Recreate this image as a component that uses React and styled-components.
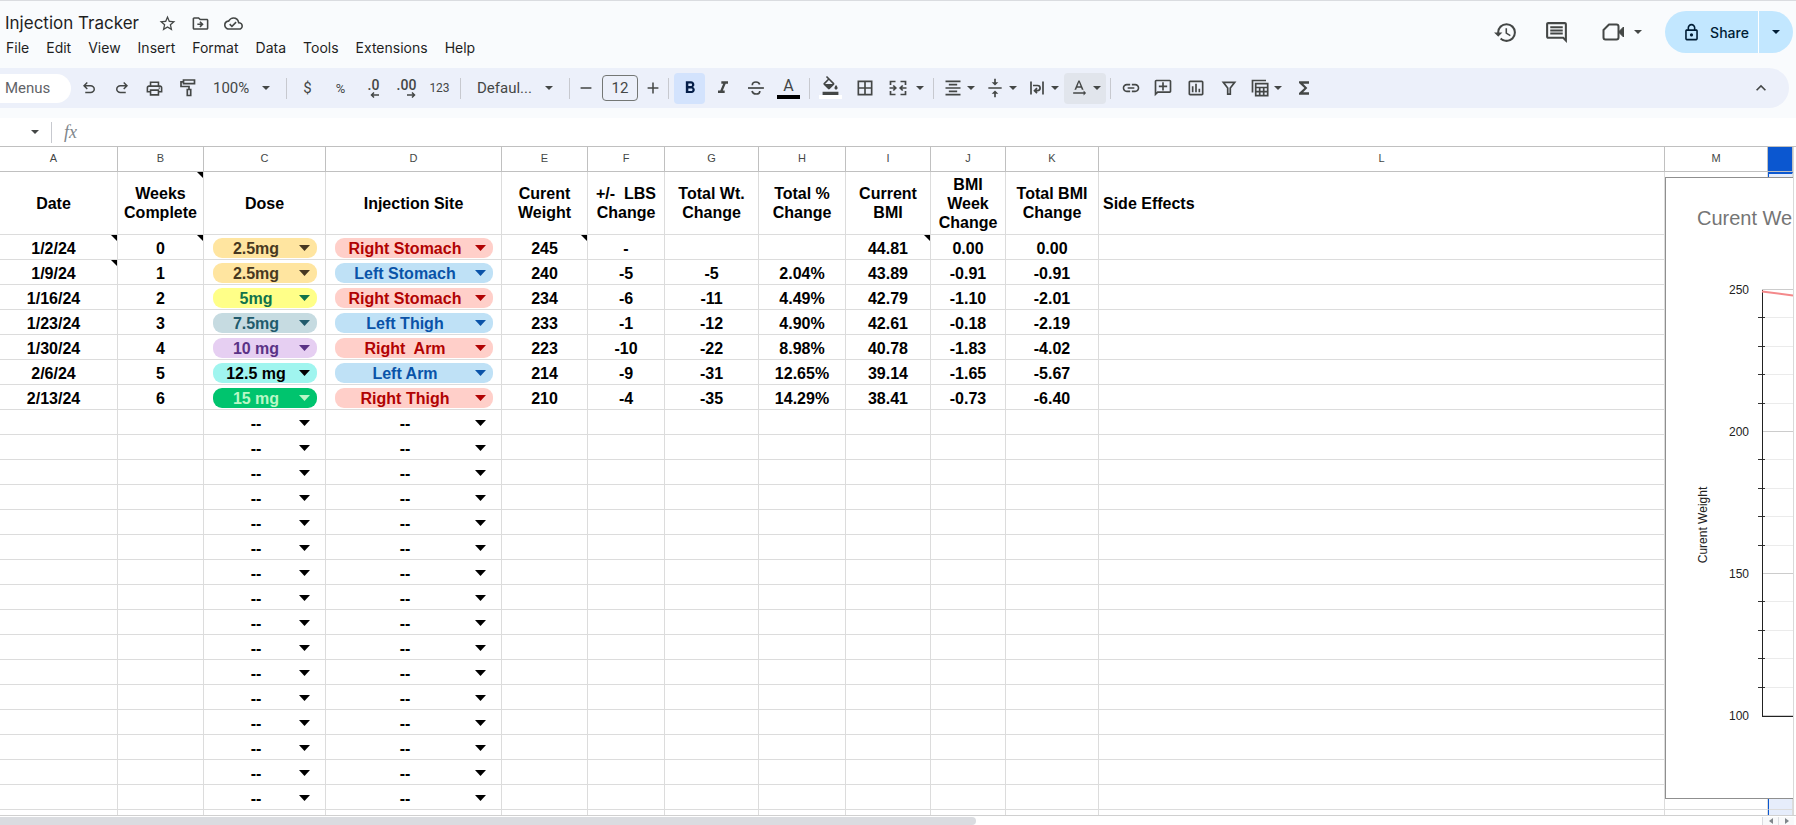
import React from 'react';
import styled, { createGlobalStyle } from 'styled-components';
import {
  MdBorderAll,
  MdExpandLess,
  MdFormatAlignCenter,
  MdFormatBold,
  MdFormatColorFill,
  MdFormatItalic,
  MdFunctions,
  MdHistory,
  MdLink,
  MdOutlineAddComment,
  MdOutlineCloudDone,
  MdOutlineComment,
  MdOutlineDriveFileMove,
  MdOutlineInsertChart,
  MdOutlineLock,
  MdOutlinePrint,
  MdStarBorder,
  MdTextRotationNone,
  MdVerticalAlignCenter
} from 'react-icons/md';

const GlobalStyle = createGlobalStyle`
  * {
    box-sizing: border-box;
  }

  body {
    margin: 0;
    background: #fff;
    color: #1f1f1f;
    font-family: Roboto, sans-serif;
  }

  button,
  input,
  select {
    margin: 0;
    padding: 0;
    border: 0;
    background: none;
    color: inherit;
    font: inherit;
  }

  svg {
    display: block;
    flex: none;
  }
`;

const Page = styled.div`
  display: flex;
  flex-direction: column;
  height: 100vh;
  overflow: hidden;
`;

const TopArea = styled.header`
  padding-bottom: 10px;
  border-top: 1px solid #dadce0;
  background: #f9fbfd;
`;

const TitleBar = styled.div`
  display: flex;
  justify-content: space-between;
  height: 67px;
  padding-right: 3px;
  font-family: Inter, Roboto, sans-serif;
`;

const TitleColumn = styled.div`
  display: flex;
  flex-direction: column;
  padding: 9px 0 0 5px;
`;

const TitleRow = styled.div`
  display: flex;
  align-items: center;
  gap: 14px;
  height: 26px;
  color: #444746;
`;

const DocTitle = styled.h1`
  margin: 0 5px 0 0;
  color: #1f1f1f;
  font-size: 17px;
  font-weight: 400;
  line-height: 24px;
`;

const PlainButton = styled.button`
  display: flex;
  align-items: center;
  justify-content: center;
`;

const MenuBar = styled.nav`
  display: flex;
  gap: 17px;
  padding-left: 1px;
  font-size: 14px;
  line-height: 24px;
`;

const Actions = styled.div`
  display: flex;
  align-items: center;
  gap: 26px;
  height: 62px;
  color: #444746;
`;

const MeetButton = styled(PlainButton)`
  gap: 9px;
  margin-left: 7px;
`;

const ShareGroup = styled.div`
  display: flex;
  height: 42px;
  margin-left: -3px;
  color: #001d35;
`;

const ShareButton = styled(PlainButton)`
  gap: 9px;
  width: 93px;
  padding-left: 8px;
  border-radius: 21px 0 0 21px;
  background: #c2e7ff;
  font-size: 14px;
  font-weight: 500;
`;

const ShareMenuButton = styled(PlainButton)`
  width: 35px;
  border-left: 1px solid #fff;
  border-radius: 0 21px 21px 0;
  background: #c2e7ff;
`;

const Toolbar = styled.div`
  display: flex;
  align-items: center;
  height: 40px;
  margin-right: 7px;
  border-radius: 0 20px 20px 0;
  background: #ecf0fa;
  color: #444746;
  font-size: 15px;
`;

const MenuSearch = styled.input`
  width: 71px;
  height: 29px;
  margin-right: 1px;
  padding-left: 5px;
  border-radius: 0 15px 15px 0;
  background: #fff;
  font-size: 15px;

  &::placeholder {
    color: #5f6368;
    opacity: 1;
  }
`;

const Tool = styled.button`
  display: flex;
  align-items: center;
  justify-content: center;
  width: ${({ $width }) => $width || 31}px;
  height: 31px;
  margin: 0 1px;
  border-radius: 4px;
  background: ${({ $active }) => ($active ? '#d3e3fd' : 'transparent')};
  color: ${({ $active }) => ($active ? '#041e49' : 'inherit')};
  font-size: ${({ $size }) => $size || 15}px;
`;

const MenuTool = styled.button`
  display: flex;
  align-items: center;
  justify-content: center;
  gap: ${({ $gap }) => $gap || 4}px;
  width: ${({ $width }) => $width || 42}px;
  height: 31px;
  border-radius: 4px;
  background: ${({ $hover }) => ($hover ? '#e1e5ec' : 'transparent')};
`;

const Mirrored = styled.span`
  transform: scaleX(-1);
`;

const Divider = styled.span`
  width: 1px;
  height: 21px;
  margin: 0 4px;
  background: #c7c9cf;
`;

const SelectWrap = styled.span`
  position: relative;
  display: flex;
  align-items: center;
  width: ${({ $width }) => $width}px;

  svg {
    position: absolute;
    right: 12px;
    pointer-events: none;
  }
`;

const ToolSelect = styled.select`
  width: 100%;
  height: 31px;
  padding-left: ${({ $indent }) => $indent}px;
  appearance: none;
`;

const SizeInput = styled.input`
  width: 36px;
  height: 26px;
  margin: 0 4px;
  border: 1px solid #747775;
  border-radius: 4px;
  text-align: center;
`;

const DecimalLabel = styled.span`
  display: flex;
  flex-direction: column;
  align-items: flex-end;
  font-size: 14px;
  font-weight: 500;
  line-height: 13px;
`;

const ColorTool = styled.span`
  display: flex;
  flex-direction: column;
  align-items: center;
  justify-content: flex-end;
  width: 23px;
  height: 22px;
  border-bottom: 4px solid ${({ $color }) => $color};
  font-size: 16px;
  line-height: 18px;
`;

const CollapseButton = styled(PlainButton)`
  width: 31px;
  height: 31px;
  margin: 0 13px 0 auto;
`;

const FormulaBar = styled.div`
  display: flex;
  align-items: center;
  height: 28px;
  color: #444746;
`;

const NameBoxButton = styled(PlainButton)`
  width: 47px;
  height: 24px;
  padding-left: 23px;
`;

const FxLabel = styled.label`
  margin: 0 8px;
  color: #80868b;
  font-family: 'Liberation Serif', serif;
  font-size: 18px;
  font-style: italic;
`;

const FormulaInput = styled.input`
  flex: 1;
  height: 24px;
`;

const SheetArea = styled.main`
  position: relative;
  display: flex;
  flex: 1;
  min-height: 0;
  overflow: hidden;
  border-top: 1px solid #c0c0c0;
  border-bottom: 1px solid #d0d0d0;
`;

const TableBox = styled.div`
  flex: 1;
  min-width: 0;
`;

const VerticalGutter = styled.div`
  width: 3px;
  border-left: 1px solid #d9d9d9;
`;

const SheetTable = styled.table`
  width: 100%;
  border-collapse: separate;
  border-spacing: 0;
  table-layout: fixed;
  color: #000;
  font-family: 'Liberation Sans', Arial, sans-serif;
`;

const ColumnHead = styled.th`
  height: 25px;
  padding: 0 ${({ $offset }) => $offset || 0}px 2px 0;
  border-right: 1px solid #c0c0c0;
  border-bottom: 1px solid #c0c0c0;
  background: ${({ $selected }) => ($selected ? '#0b57d0' : '#fff')};
  color: #444746;
  font-size: 11px;
  font-weight: 400;
`;

const Cell = styled.td`
  position: relative;
  height: ${({ $tall }) => ($tall ? 63 : 25)}px;
  padding: ${({ $text }) => ($text ? 2 : 0)}px ${({ $offset }) => $offset || 0}px 0 ${({ $left }) => ($left ? 4 : 0)}px;
  border-right: 1px solid #dcdcdc;
  border-bottom: 1px solid #dcdcdc;
  font-size: 16px;
  font-weight: 700;
  line-height: 19px;
  text-align: ${({ $left }) => ($left ? 'left' : 'center')};
  white-space: pre;
`;

const SelectedCell = styled(Cell)`
  border-top: ${({ $tall }) => ($tall ? '2px solid #0b57d0' : '0')};
  border-left: 1px solid #0b57d0;
  background: #e6edfb;
`;

/* comment marker in the top right corner of a cell */
const NoteMark = styled.span`
  position: absolute;
  top: 0;
  right: 0;
  border-top: 6px solid #000;
  border-left: 6px solid transparent;
`;

const Chip = styled.div`
  position: relative;
  display: flex;
  align-items: center;
  height: 20px;
  margin: 1px 8px 0 9px;
  border-radius: 9px;
  background: ${({ $bg }) => $bg};
  color: ${({ $color }) => $color};

  svg {
    position: absolute;
    right: 7px;
    pointer-events: none;
  }
`;

const ChipSelect = styled.select`
  width: 100%;
  height: 20px;
  padding: 1px 18px 0 0;
  appearance: none;
  line-height: 19px;
  text-align: center;
  text-align-last: center;
`;

/* the chart floats over the cells */
const ChartCard = styled.figure`
  position: absolute;
  top: 30px;
  right: 3px;
  width: 128px;
  height: 622px;
  margin: 0;
  border: 1px solid #8f8f8f;
  border-right: 0;
  background: #fff;
  font-family: 'Liberation Sans', Arial, sans-serif;
`;

const ScrollRow = styled.div`
  display: flex;
  align-items: stretch;
  height: 9px;
  padding: 1px 2px 0 0;
`;

const ScrollTrack = styled.div`
  flex: 1;
`;

const ScrollThumb = styled.div`
  width: 55.4%;
  height: 8px;
  border-radius: 0 4px 4px 0;
  background: #dadce0;
`;

const ScrollButton = styled(PlainButton)`
  width: 16px;
  border-left: 1px solid #dadce0;
  background: #f8f9fa;
  color: #80868b;
`;

const Caret = ({ width = 8, height = 4 }) => (
  <svg width={width} height={height} viewBox="0 0 10 5" preserveAspectRatio="none" aria-hidden="true">
    <path d="M0 0h10L5 5z" fill="currentColor" />
  </svg>
);

const Symbol = ({ path, size = 18 }) => (
  <svg width={size} height={size} viewBox="0 -960 960 960" fill="currentColor" aria-hidden="true">
    <path d={path} />
  </svg>
);

const StrokeIcon = ({ size = 20, children }) => (
  <svg
    width={size}
    height={size}
    viewBox="0 0 20 20"
    fill="none"
    stroke="currentColor"
    strokeWidth="1.7"
    aria-hidden="true"
  >
    {children}
  </svg>
);

const undoPath =
  'M280-200v-80h284q63 0 109.5-40T720-420q0-60-46.5-100T564-560H312l104 104-56 56-200-200 200-200 56 56-104 104h252q97 0 166.5 63T800-420q0 94-69.5 157T564-200H280Z';
const redoPath =
  'M396-200q-97 0-166.5-63T160-420q0-94 69.5-157T396-640h252L544-744l56-56 200 200-200 200-56-56 104-104H396q-63 0-109.5 40T240-420q0 60 46.5 100T396-280h284v80H396Z';

const PaintIcon = () => (
  <StrokeIcon>
    <path d="M5.5 2h11v3.600h-11zM5.500 3.800H3v4.700h8v3M9.300 11.500h3.400v6H9.300z" />
  </StrokeIcon>
);

const StrikeIcon = () => (
  <StrokeIcon>
    <path d="M2 10h16" />
    <path d="M6.300 7.200C6.300 5 8 4 10 4c1.900 0 3.200.9 3.700 2.500M6 13c.5 1.900 2 3 4.100 3 2.200 0 3.700-1.100 3.700-3.100" />
  </StrokeIcon>
);

const MergeIcon = () => (
  <StrokeIcon>
    <path d="M7.500 3.500H2.500v3.500M12.500 3.500h5v3.500M7.500 16.500H2.500V13M12.500 16.500h5V13" />
    <path d="M1.500 10h6M5.300 7.500 7.800 10l-2.500 2.500M18.500 10h-6M14.700 7.500 12.200 10l2.500 2.500" />
  </StrokeIcon>
);

const WrapIcon = () => (
  <StrokeIcon>
    <path d="M4 3.500v13M16 3.500v13M6 7.500h4.500a2.600 2.600 0 0 1 0 5.200H8M10 10.200l-2.500 2.500 2.500 2.500" />
  </StrokeIcon>
);

const FilterIcon = () => (
  <StrokeIcon>
    <path d="M4.300 4.300h11.400L11.300 10v6.200H8.700V10z" />
  </StrokeIcon>
);

const TableViewIcon = () => (
  <StrokeIcon>
    <path d="M2.500 14.500V2.500H16" />
    <path d="M5.700 5.700h12v12h-12zM5.700 9.500h12M5.700 13.600h12M9.700 9.500v8M13.700 9.500v8" />
  </StrokeIcon>
);

const MeetIcon = () => (
  <svg width="23" height="20" viewBox="0 0 23 20" aria-hidden="true">
    <path
      d="M7 2.500h7.500a2 2 0 0 1 2 2v11a2 2 0 0 1-2 2h-11a2 2 0 0 1-2-2V8z"
      fill="none"
      stroke="currentColor"
      strokeWidth="2"
      strokeLinejoin="round"
    />
    <path d="M16.500 10 21.500 5v10z" fill="currentColor" stroke="currentColor" />
  </svg>
);

const SmallArrow = ({ left }) => (
  <svg width="9" height="6" viewBox="0 0 9 6" fill="none" stroke="currentColor" strokeWidth="1.500" aria-hidden="true">
    <path d={left ? 'M9 3H1.500M4 .5 1.500 3 4 5.500' : 'M0 3h7.500M5 .5 7.500 3 5 5.500'} />
  </svg>
);

const menus = ['File', 'Edit', 'View', 'Insert', 'Format', 'Data', 'Tools', 'Extensions', 'Help'];

const columns = [
  { letter: 'A', width: 118, title: 'Date', offset: 10 },
  { letter: 'B', width: 86, title: 'Weeks\nComplete', note: true },
  { letter: 'C', width: 122, title: 'Dose' },
  { letter: 'D', width: 176, title: 'Injection Site' },
  { letter: 'E', width: 86, title: 'Curent\nWeight' },
  { letter: 'F', width: 77, title: '+/-  LBS\nChange' },
  { letter: 'G', width: 94, title: 'Total Wt.\nChange' },
  { letter: 'H', width: 87, title: 'Total %\nChange' },
  { letter: 'I', width: 85, title: 'Current\nBMI' },
  { letter: 'J', width: 75, title: 'BMI\nWeek\nChange' },
  { letter: 'K', width: 93, title: 'Total BMI\nChange' },
  { letter: 'L', title: 'Side Effects', left: true },
  { letter: 'M', width: 103, title: '' }
];

const doses = {
  '2.5mg': ['#ffe5a0', '#473821'],
  '5mg': ['#ffff88', '#11734b'],
  '7.5mg': ['#c6dbe1', '#215a6c'],
  '10 mg': ['#e6cff2', '#5a3286'],
  '12.5 mg': ['#a0f5ef', '#000000'],
  '15 mg': ['#00c46e', '#b9f8c6']
};

const red = ['#ffcfc9', '#b10202'];
const blue = ['#bfe1f6', '#0a53a8'];

const sites = {
  'Right Stomach': red,
  'Left Stomach': blue,
  'Left Thigh': blue,
  'Right\u00a0 Arm': red,
  'Left Arm': blue,
  'Right Thigh': red
};

const records = [
  ['1/2/24', '0', '2.5mg', 'Right Stomach', '245', '-', '', '', '44.81', '0.00', '0.00'],
  ['1/9/24', '1', '2.5mg', 'Left Stomach', '240', '-5', '-5', '2.04%', '43.89', '-0.91', '-0.91'],
  ['1/16/24', '2', '5mg', 'Right Stomach', '234', '-6', '-11', '4.49%', '42.79', '-1.10', '-2.01'],
  ['1/23/24', '3', '7.5mg', 'Left Thigh', '233', '-1', '-12', '4.90%', '42.61', '-0.18', '-2.19'],
  ['1/30/24', '4', '10 mg', 'Right\u00a0 Arm', '223', '-10', '-22', '8.98%', '40.78', '-1.83', '-4.02'],
  ['2/6/24', '5', '12.5 mg', 'Left Arm', '214', '-9', '-31', '12.65%', '39.14', '-1.65', '-5.67'],
  ['2/13/24', '6', '15 mg', 'Right Thigh', '210', '-4', '-35', '14.29%', '38.41', '-0.73', '-6.40']
];

const rows = records.concat(Array.from({ length: 17 }, () => []));

// row index + column letter of the cells that hold a comment
const notes = ['0A', '0B', '0E', '0I', '1A'];

const ChipCell = ({ value, colors, label }) => {
  const [bg, color] = colors[value] || ['transparent', '#000000'];
  return (
    <Chip $bg={bg} $color={color}>
      <ChipSelect aria-label={label} defaultValue={value || '--'}>
        <option>{value || '--'}</option>
      </ChipSelect>
      <Caret width={11} height={6} />
    </Chip>
  );
};

const Header = () => (
  <TitleBar>
    <TitleColumn>
      <TitleRow>
        <DocTitle>Injection Tracker</DocTitle>
        <PlainButton aria-label="Star"><MdStarBorder size={19} /></PlainButton>
        <PlainButton aria-label="Move"><MdOutlineDriveFileMove size={19} /></PlainButton>
        <PlainButton aria-label="Document status"><MdOutlineCloudDone size={19} /></PlainButton>
      </TitleRow>
      <MenuBar>
        {menus.map(name => <PlainButton key={name}>{name}</PlainButton>)}
      </MenuBar>
    </TitleColumn>
    <Actions>
      <PlainButton aria-label="Version history"><MdHistory size={25} /></PlainButton>
      <PlainButton aria-label="Comments"><MdOutlineComment size={25} /></PlainButton>
      <MeetButton aria-label="Join a call">
        <MeetIcon />
        <Caret />
      </MeetButton>
      <ShareGroup>
        <ShareButton><MdOutlineLock size={19} />Share</ShareButton>
        <ShareMenuButton aria-label="Share options"><Caret /></ShareMenuButton>
      </ShareGroup>
    </Actions>
  </TitleBar>
);

const Tools = () => (
  <Toolbar role="toolbar">
    <MenuSearch aria-label="Search menus" placeholder="Menus" />
    <Tool aria-label="Undo"><Symbol path={undoPath} /></Tool>
    <Tool aria-label="Redo"><Symbol path={redoPath} /></Tool>
    <Tool aria-label="Print"><MdOutlinePrint size={19} /></Tool>
    <Tool aria-label="Paint format"><PaintIcon /></Tool>
    <SelectWrap $width={78}>
      <ToolSelect aria-label="Zoom" $indent={9}><option>100%</option></ToolSelect>
      <Caret />
    </SelectWrap>
    <Divider />
    <Tool aria-label="Currency">$</Tool>
    <Tool aria-label="Percent" $size={13}>%</Tool>
    <Tool aria-label="Decrease decimal places">
      <DecimalLabel>.0<SmallArrow left /></DecimalLabel>
    </Tool>
    <Tool aria-label="Increase decimal places">
      <DecimalLabel>.00<SmallArrow /></DecimalLabel>
    </Tool>
    <Tool aria-label="More formats" $size={12}>123</Tool>
    <Divider />
    <SelectWrap $width={100}>
      <ToolSelect aria-label="Font" $indent={12}><option>Defaul...</option></ToolSelect>
      <Caret />
    </SelectWrap>
    <Divider />
    <Tool $width={22} aria-label="Decrease font size"><StrokeIcon size={18}><path d="M4 10h12" /></StrokeIcon></Tool>
    <SizeInput aria-label="Font size" defaultValue="12" />
    <Tool $width={20} aria-label="Increase font size"><StrokeIcon size={18}><path d="M4 10h12M10 4v12" /></StrokeIcon></Tool>
    <Divider />
    <Tool $active aria-label="Bold"><MdFormatBold size={20} /></Tool>
    <Tool aria-label="Italic"><MdFormatItalic size={20} /></Tool>
    <Tool aria-label="Strikethrough"><StrikeIcon /></Tool>
    <Tool aria-label="Text color"><ColorTool $color="#000">A</ColorTool></Tool>
    <Divider />
    <Tool aria-label="Fill color"><ColorTool $color="#fff"><MdFormatColorFill size={19} /></ColorTool></Tool>
    <Tool $width={33} aria-label="Borders"><MdBorderAll size={20} /></Tool>
    <MenuTool $width={47} $gap={8} aria-label="Merge cells"><MergeIcon /><Caret /></MenuTool>
    <Divider />
    <MenuTool aria-label="Horizontal align"><MdFormatAlignCenter size={20} /><Caret /></MenuTool>
    <MenuTool aria-label="Vertical align"><MdVerticalAlignCenter size={20} /><Caret /></MenuTool>
    <MenuTool aria-label="Text wrapping"><WrapIcon /><Caret /></MenuTool>
    <MenuTool $hover aria-label="Text rotation"><MdTextRotationNone size={20} /><Caret /></MenuTool>
    <Divider />
    <Tool $width={29} aria-label="Insert link"><MdLink size={20} /></Tool>
    <Tool aria-label="Insert comment"><Mirrored><MdOutlineAddComment size={20} /></Mirrored></Tool>
    <Tool aria-label="Insert chart"><MdOutlineInsertChart size={20} /></Tool>
    <Tool aria-label="Create a filter"><FilterIcon /></Tool>
    <MenuTool aria-label="Table views"><TableViewIcon /><Caret /></MenuTool>
    <Tool aria-label="Functions"><MdFunctions size={20} /></Tool>
    <CollapseButton aria-label="Hide the menus"><MdExpandLess size={20} /></CollapseButton>
  </Toolbar>
);

const Chart = () => {
  const ticks = Array.from({ length: 16 }, (_, i) => ({
    major: i % 5 === 0,
    value: 250 - i * 10,
    y: Math.round(112 + i * 28.4) - 0.5
  }));

  return (
    <ChartCard>
      <svg width="127" height="620" role="img" aria-label="Curent Weight chart">
        <text x="31" y="47" fontSize="20" fill="#757575">Curent We</text>
        {ticks.map(({ major, value, y }) => (
          <g key={value}>
            <path d={`M96 ${y}h31`} stroke={major ? '#cccccc' : '#ebebeb'} />
            {major && <text x="83" y={y + 4} fontSize="12" fill="#222" textAnchor="end">{value}</text>}
            {!major && <path d={`M92 ${y}h7`} stroke="#333" />}
          </g>
        ))}
        <path d="M96.500 112v427M96 538.500h31" stroke="#222" />
        <path d="M96 113.500 127 117.500" stroke="#f4898b" strokeWidth="2" />
        <text fontSize="12" fill="#222" textAnchor="middle" transform="translate(41 347) rotate(-90)">
          Curent Weight
        </text>
      </svg>
    </ChartCard>
  );
};

const Sheet = () => (
  <SheetArea>
    <TableBox>
      <SheetTable>
        <colgroup>
          {columns.map(({ letter, width }) => <col key={letter} width={width} />)}
          <col width="25" />
        </colgroup>
        <thead>
          <tr>
            {columns.map(({ letter, offset }) => (
              <ColumnHead key={letter} $offset={offset}>{letter}</ColumnHead>
            ))}
            <ColumnHead $selected aria-label="N" />
          </tr>
        </thead>
        <tbody>
          <tr>
            {columns.map(({ letter, title, offset, left, note }) => (
              <Cell key={letter} $tall $offset={offset} $left={left}>
                {title}
                {note && <NoteMark />}
              </Cell>
            ))}
            <SelectedCell $tall />
          </tr>
          {rows.map((row, i) => (
            <tr key={i}>
              {columns.map(({ letter, offset }, j) => (
                <Cell key={letter} $offset={offset} $text={letter !== 'C' && letter !== 'D'}>
                  {letter === 'C' && <ChipCell value={row[j]} colors={doses} label={`Dose ${i}`} />}
                  {letter === 'D' && <ChipCell value={row[j]} colors={sites} label={`Injection site ${i}`} />}
                  {letter !== 'C' && letter !== 'D' && row[j]}
                  {notes.includes(i + letter) && <NoteMark />}
                </Cell>
              ))}
              <SelectedCell />
            </tr>
          ))}
        </tbody>
      </SheetTable>
    </TableBox>
    <VerticalGutter />
    <Chart />
  </SheetArea>
);

const App = () => {
  return (
    <Page>
      <GlobalStyle />
      <TopArea>
        <Header />
        <Tools />
      </TopArea>
      <FormulaBar>
        <NameBoxButton aria-label="Named ranges"><Caret /></NameBoxButton>
        <Divider />
        <FxLabel htmlFor="formula">fx</FxLabel>
        <FormulaInput id="formula" />
      </FormulaBar>
      <Sheet />
      <ScrollRow>
        <ScrollTrack>
          <ScrollThumb />
        </ScrollTrack>
        <ScrollButton aria-label="Scroll left">
          <svg width="4" height="6" viewBox="0 0 4 6"><path d="M4 0v6L0 3z" fill="currentColor" /></svg>
        </ScrollButton>
        <ScrollButton aria-label="Scroll right">
          <svg width="4" height="6" viewBox="0 0 4 6"><path d="M0 0v6l4-3z" fill="currentColor" /></svg>
        </ScrollButton>
      </ScrollRow>
    </Page>
  );
};

export default App;
